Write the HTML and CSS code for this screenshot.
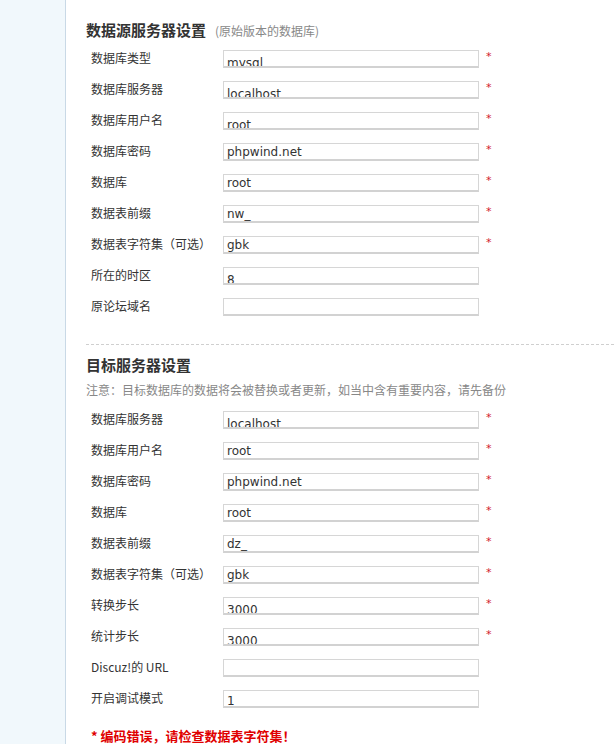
FILE: index.html
```html
<!DOCTYPE html>
<html>
<head>
<meta charset="utf-8">
<link rel="stylesheet" href="styles.css">
</head>
<body>
<div class="page">
  <div class="sidebar"></div>
  <div class="main">
    <h2 class="title">数据源服务器设置<span class="sub">(原始版本的数据库)</span></h2>
    <div class="rows first">
      <div class="row"><label>数据库类型</label><input class="low" value="mysql"><span class="star">*</span></div>
      <div class="row"><label>数据库服务器</label><input class="low" value="localhost"><span class="star">*</span></div>
      <div class="row"><label>数据库用户名</label><input class="low" value="root"><span class="star">*</span></div>
      <div class="row"><label>数据库密码</label><input value="phpwind.net"><span class="star">*</span></div>
      <div class="row"><label>数据库</label><input value="root"><span class="star">*</span></div>
      <div class="row"><label>数据表前缀</label><input value="nw_"><span class="star">*</span></div>
      <div class="row"><label>数据表字符集（可选）</label><input value="gbk"><span class="star">*</span></div>
      <div class="row"><label>所在的时区</label><input class="low" value="8"></div>
      <div class="row"><label>原论坛域名</label><input value=""></div>
    </div>
    <div class="sep"></div>
    <h2 class="title second">目标服务器设置</h2>
    <p class="note">注意：目标数据库的数据将会被替换或者更新，如当中含有重要内容，请先备份</p>
    <div class="rows target">
      <div class="row"><label>数据库服务器</label><input class="low" value="localhost"><span class="star">*</span></div>
      <div class="row"><label>数据库用户名</label><input value="root"><span class="star">*</span></div>
      <div class="row"><label>数据库密码</label><input value="phpwind.net"><span class="star">*</span></div>
      <div class="row"><label>数据库</label><input value="root"><span class="star">*</span></div>
      <div class="row"><label>数据表前缀</label><input value="dz_"><span class="star">*</span></div>
      <div class="row"><label>数据表字符集（可选）</label><input value="gbk"><span class="star">*</span></div>
      <div class="row"><label>转换步长</label><input class="low" value="3000"><span class="star">*</span></div>
      <div class="row"><label>统计步长</label><input class="low" value="3000"><span class="star">*</span></div>
      <div class="row"><label>Discuz!的 URL</label><input value=""></div>
      <div class="row"><label>开启调试模式</label><input class="mid" value="1"></div>
    </div>
    <p class="error">* 编码错误，请检查数据表字符集！</p>
  </div>
</div>
</body>
</html>
```
FILE: styles.css
```css
html, body {
  margin: 0;
  padding: 0;
  background: #fff;
}
body {
  font-family: "Noto Sans CJK SC", "DejaVu Sans", sans-serif;
  font-size: 12px;
  color: #333;
}
.page {
  display: flex;
  min-height: 744px;
}
.sidebar {
  width: 65px;
  flex: none;
  background: #f1f8fc;
  border-right: 1px solid #c9d9e6;
}
.main {
  flex: 1;
  padding: 20px 0 0 20px;
}
.title {
  margin: 0;
  font-size: 15px;
  line-height: 20px;
  font-weight: bold;
  color: #333;
}
.sub {
  font-size: 12px;
  font-weight: normal;
  color: #888;
  margin-left: 9px;
}
.rows {
  padding-left: 5px;
}
.first {
  margin-top: 9px;
}
.row {
  display: flex;
  align-items: flex-start;
  height: 31px;
}
.row label {
  width: 132px;
  flex: none;
  line-height: 14px;
  padding-top: 1px;
  color: #333;
}
.row input {
  box-sizing: border-box;
  width: 256px;
  height: 18px;
  margin: 0;
  padding: 0 3px;
  border: 1px solid #d6d6d6;
  border-bottom: 2px solid #d2d2d2;
  font-family: "DejaVu Sans", sans-serif;
  font-size: 12px;
  color: #333;
  background: #fff;
  outline: none;
}
.row input.low {
  padding-top: 8px;
}
.row input.mid {
  padding-top: 4px;
}
.star {
  color: #d21a2a;
  font-size: 11px;
  line-height: 12px;
  margin-left: 7px;
  padding-top: 1px;
  font-family: "DejaVu Sans", sans-serif;
}
.sep {
  margin-top: 15px;
  border-top: 1px dashed #cfcfcf;
}
.second {
  margin-top: 10px;
}
.note {
  margin: 6px 0 0 0;
  line-height: 18px;
  color: #888;
}
.target {
  margin-top: 12px;
}
.error {
  margin: 8px 0 0 5px;
  line-height: 14px;
  font-size: 13px;
  font-weight: bold;
  color: #e00000;
}
```
